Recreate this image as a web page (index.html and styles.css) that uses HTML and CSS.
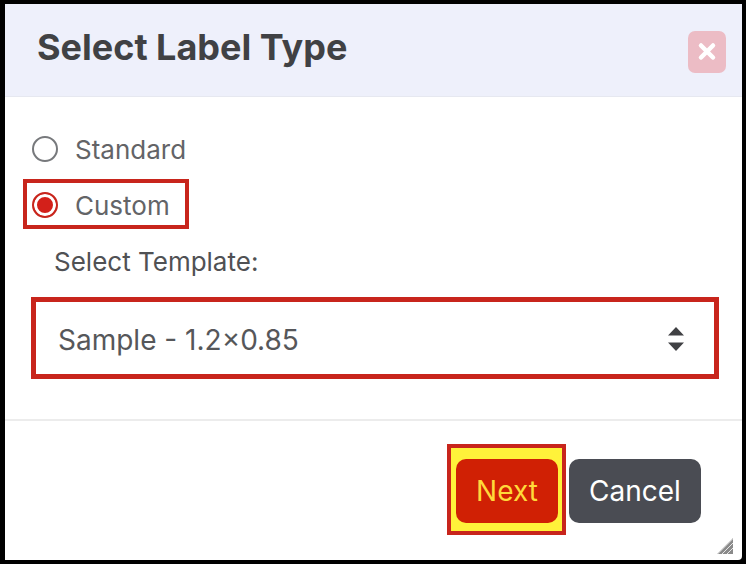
FILE: index.html
```html
<!DOCTYPE html>
<html lang="en">
<head>
<meta charset="utf-8">
<title>Select Label Type</title>
<link rel="stylesheet" href="styles.css">
</head>
<body>
<main class="modal">
  <header class="modal-header">
    <h1 class="modal-title">Select Label Type</h1>
    <button class="close-btn" type="button" aria-label="Close">
      <svg width="20" height="20" viewBox="0 0 20 20"><path d="M4 3.500 16 15.500M16 3.500 4 15.500" stroke="#fff" stroke-width="4.500" stroke-linecap="round" fill="none"/></svg>
    </button>
  </header>
  <section class="modal-body">
    <div class="radio-row">
      <span class="radio"></span>
      <span class="radio-label">Standard</span>
    </div>
    <div class="radio-row radio-row-marked">
      <span class="radio radio-checked"></span>
      <span class="radio-label">Custom</span>
    </div>
    <div class="field-label">Select Template:</div>
    <div class="select-box">
      <span>Sample - 1.2×0.85</span>
      <svg class="select-arrows" width="16" height="24" viewBox="0 0 16 24"><path d="M8 0 16 8.500H0ZM0 15.500H16L8 24Z" fill="#404144"/></svg>
    </div>
  </section>
  <footer class="modal-footer">
    <div class="next-mark"><button class="btn btn-next" type="button">Next</button></div>
    <button class="btn btn-cancel" type="button">Cancel</button>
  </footer>
  <svg class="resize-grip" width="18" height="18" viewBox="0 0 18 18"><path d="M17 1V17H1Z" fill="#8a8a8a"/><path d="M6 17 17 6M11 17 17 11M1.500 17 17 1.500" stroke="#fff" stroke-width=".8" fill="none"/></svg>
</main>
</body>
</html>
```
FILE: styles.css
```css
* { box-sizing: border-box; }
html, body { margin: 0; height: 100%; }
body {
  background: #000;
  padding: 4px 4px 4px 5px;
  font-family: Inter, "Liberation Sans", sans-serif;
  overflow: hidden;
}
.modal {
  position: relative;
  height: 556px;
  background: #fff;
  border-radius: 0 0 4px 0;
}
.modal-header {
  height: 93px;
  background: #eef0fb;
  border-bottom: 1px solid #e6e8f0;
  display: flex;
  align-items: center;
  justify-content: space-between;
  padding: 0 16px 0 32px;
}
.modal-title {
  margin: 0;
  font-size: 36px;
  font-weight: 700;
  color: #404144;
  line-height: 1;
  margin-bottom: 6px;
}
.close-btn {
  width: 38px;
  height: 42px;
  margin-top: 4px;
  border: 0;
  padding: 0;
  background: #ecbcc5;
  border-radius: 7px;
  display: flex;
  align-items: center;
  justify-content: center;
}
.modal-body { padding: 32px 23px 40px 0; }
.radio-row {
  display: flex;
  align-items: center;
  gap: 17px;
  height: 40px;
  margin-left: 27px;
}
.radio-row-marked {
  width: 166px;
  height: 50px;
  margin: 10px 0 0 18px;
  border: 4px solid #c8251c;
  padding: 2px 0 0 5px;
}
.radio {
  width: 26px;
  height: 26px;
  border: 2px solid #77797c;
  border-radius: 50%;
  background: #fff;
  flex: none;
}
.radio-checked {
  border-color: #c8251c;
  background: #d3201a;
  box-shadow: inset 0 0 0 3px #fff;
}
.radio-label { font-size: 26px; color: #636467; line-height: 1; padding-top: 2px; }
.field-label {
  margin: 17px 0 19px 49px;
  font-size: 26px;
  line-height: 32px;
  color: #505154;
}
.select-box {
  height: 82px;
  margin-left: 26px;
  border: 5px solid #c8251c;
  display: flex;
  align-items: center;
  justify-content: space-between;
  padding: 4px 30px 0 22px;
  font-size: 28px;
  color: #56575a;
}
.select-arrows { display: block; margin-top: -2px; }
.modal-footer {
  border-top: 2px solid #ececec;
  padding: 23px 41px 0 0;
  display: flex;
  justify-content: flex-end;
  align-items: flex-start;
  gap: 3px;
}
.next-mark {
  width: 119px;
  height: 91px;
  border: 4px solid #c8251c;
  background: #fff23a;
  padding: 11px 4px 8px 5px;
}
.btn {
  height: 64px;
  border: 0;
  border-radius: 10px;
  font: 400 28px Inter, "Liberation Sans", sans-serif;
  padding: 0;
}
.btn-next { width: 102px; background: #d02004; color: #ffd93a; }
.btn-cancel { width: 132px; margin-top: 15px; background: #4a4c53; color: #fff; }
.resize-grip { position: absolute; right: 8px; bottom: 5px; }
```
